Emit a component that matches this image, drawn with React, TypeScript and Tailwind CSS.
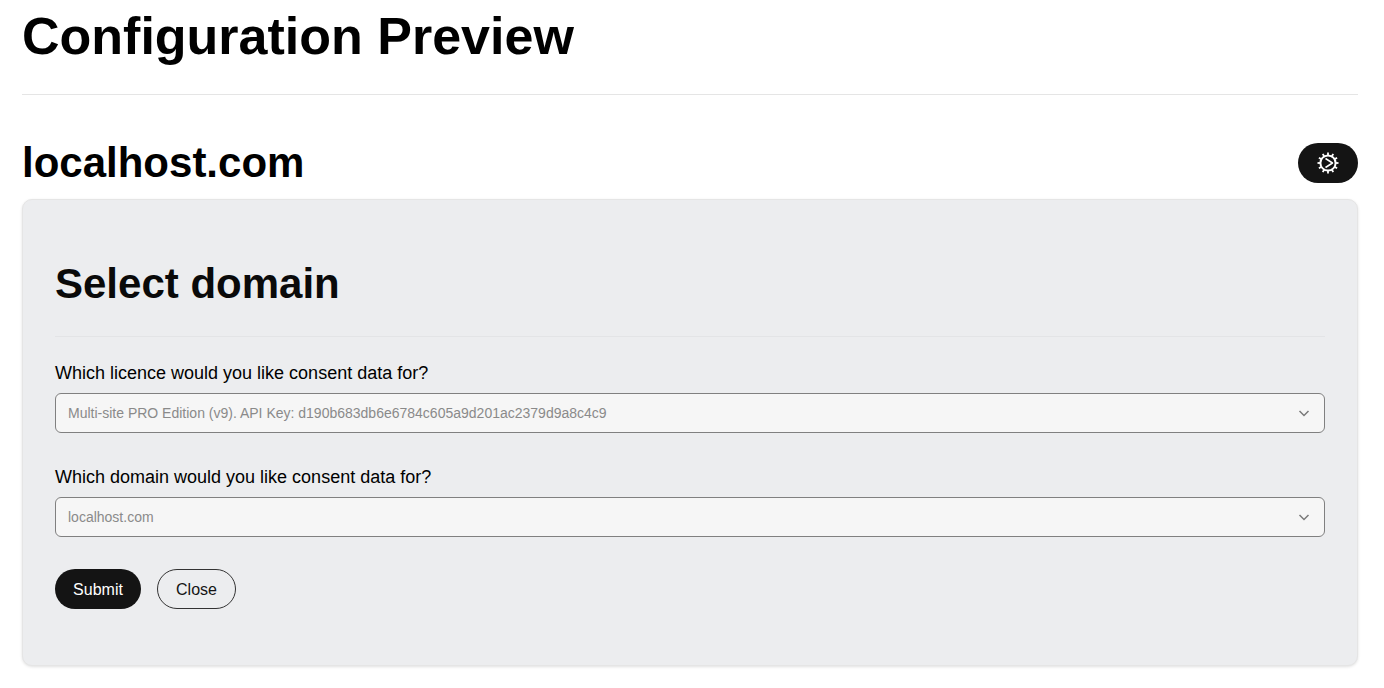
export default function App() {
  const font = { fontFamily: '"Liberation Sans", Arial, sans-serif' };
  const teeth = [0, 30, 60, 90, 120, 150, 180, 210, 240, 270, 300, 330];
  return (
    <div style={font} className="bg-white pl-[22px] pr-[26px] text-black h-[688px] overflow-hidden">
      <h1 className="text-[52px] font-bold leading-[60px] pt-[6px] h-[95px] border-b border-[#e5e5e5] box-border">Configuration Preview</h1>
      <div className="flex items-center justify-between mt-[47px] h-[42px]">
        <h2 className="text-[42px] font-bold leading-[42px]">localhost.com</h2>
        <button className="w-[60px] h-[40px] rounded-full bg-[#141414] flex items-center justify-center">
          <svg width="24" height="24" viewBox="0 0 24 24" fill="none" stroke="white">
            <circle cx="12" cy="12" r="7.6" strokeWidth="2" />
            {teeth.map((a) => (
              <path key={a} d="M12 1.5v3" strokeWidth="1.8" transform={`rotate(${a} 12 12)`} />
            ))}
            <path d="M9.5 7.5l7 4.5-7 4.5" strokeWidth="1.5" strokeLinejoin="round" />
          </svg>
        </button>
      </div>
      <div className="mt-[15px] h-[467px] rounded-[10px] bg-[#ecedef] border border-[#e5e5e5] shadow-[0_1px_3px_rgba(0,0,0,0.12)] px-[32px] box-border">
        <h2 className="text-[42px] font-bold leading-[48px] text-[#0a0a0a] mt-[60px] h-[77px] border-b border-[#e3e4e6] box-border">Select domain</h2>
        <label className="block text-[18px] leading-[24px] mt-[24px]">Which licence would you like consent data for?</label>
        <div className="mt-[8px] h-[40px] rounded-[6px] bg-[#f6f6f6] border border-[#808080] flex items-center justify-between pl-[12px] pr-[14px] text-[14px] text-[#8a8a8a] box-border">
          <span>Multi-site PRO Edition (v9). API Key: d190b683db6e6784c605a9d201ac2379d9a8c4c9</span>
          <svg width="12" height="12" viewBox="0 0 12 12" fill="none" stroke="#7a7a7a" strokeWidth="1.5"><path d="M1.5 4L6 8.5 10.5 4" /></svg>
        </div>
        <label className="block text-[18px] leading-[24px] mt-[32px]">Which domain would you like consent data for?</label>
        <div className="mt-[8px] h-[40px] rounded-[6px] bg-[#f6f6f6] border border-[#808080] flex items-center justify-between pl-[12px] pr-[14px] text-[14px] text-[#8a8a8a] box-border">
          <span>localhost.com</span>
          <svg width="12" height="12" viewBox="0 0 12 12" fill="none" stroke="#7a7a7a" strokeWidth="1.5"><path d="M1.5 4L6 8.5 10.5 4" /></svg>
        </div>
        <div className="flex gap-[16px] mt-[32px]">
          <button className="h-[40px] w-[86px] rounded-full bg-[#141414] text-white text-[16px] pt-[1px]">Submit</button>
          <button className="h-[40px] w-[79px] rounded-full border border-[#333] text-[16px] text-[#141414] pt-[1px]">Close</button>
        </div>
      </div>
    </div>
  );
}
